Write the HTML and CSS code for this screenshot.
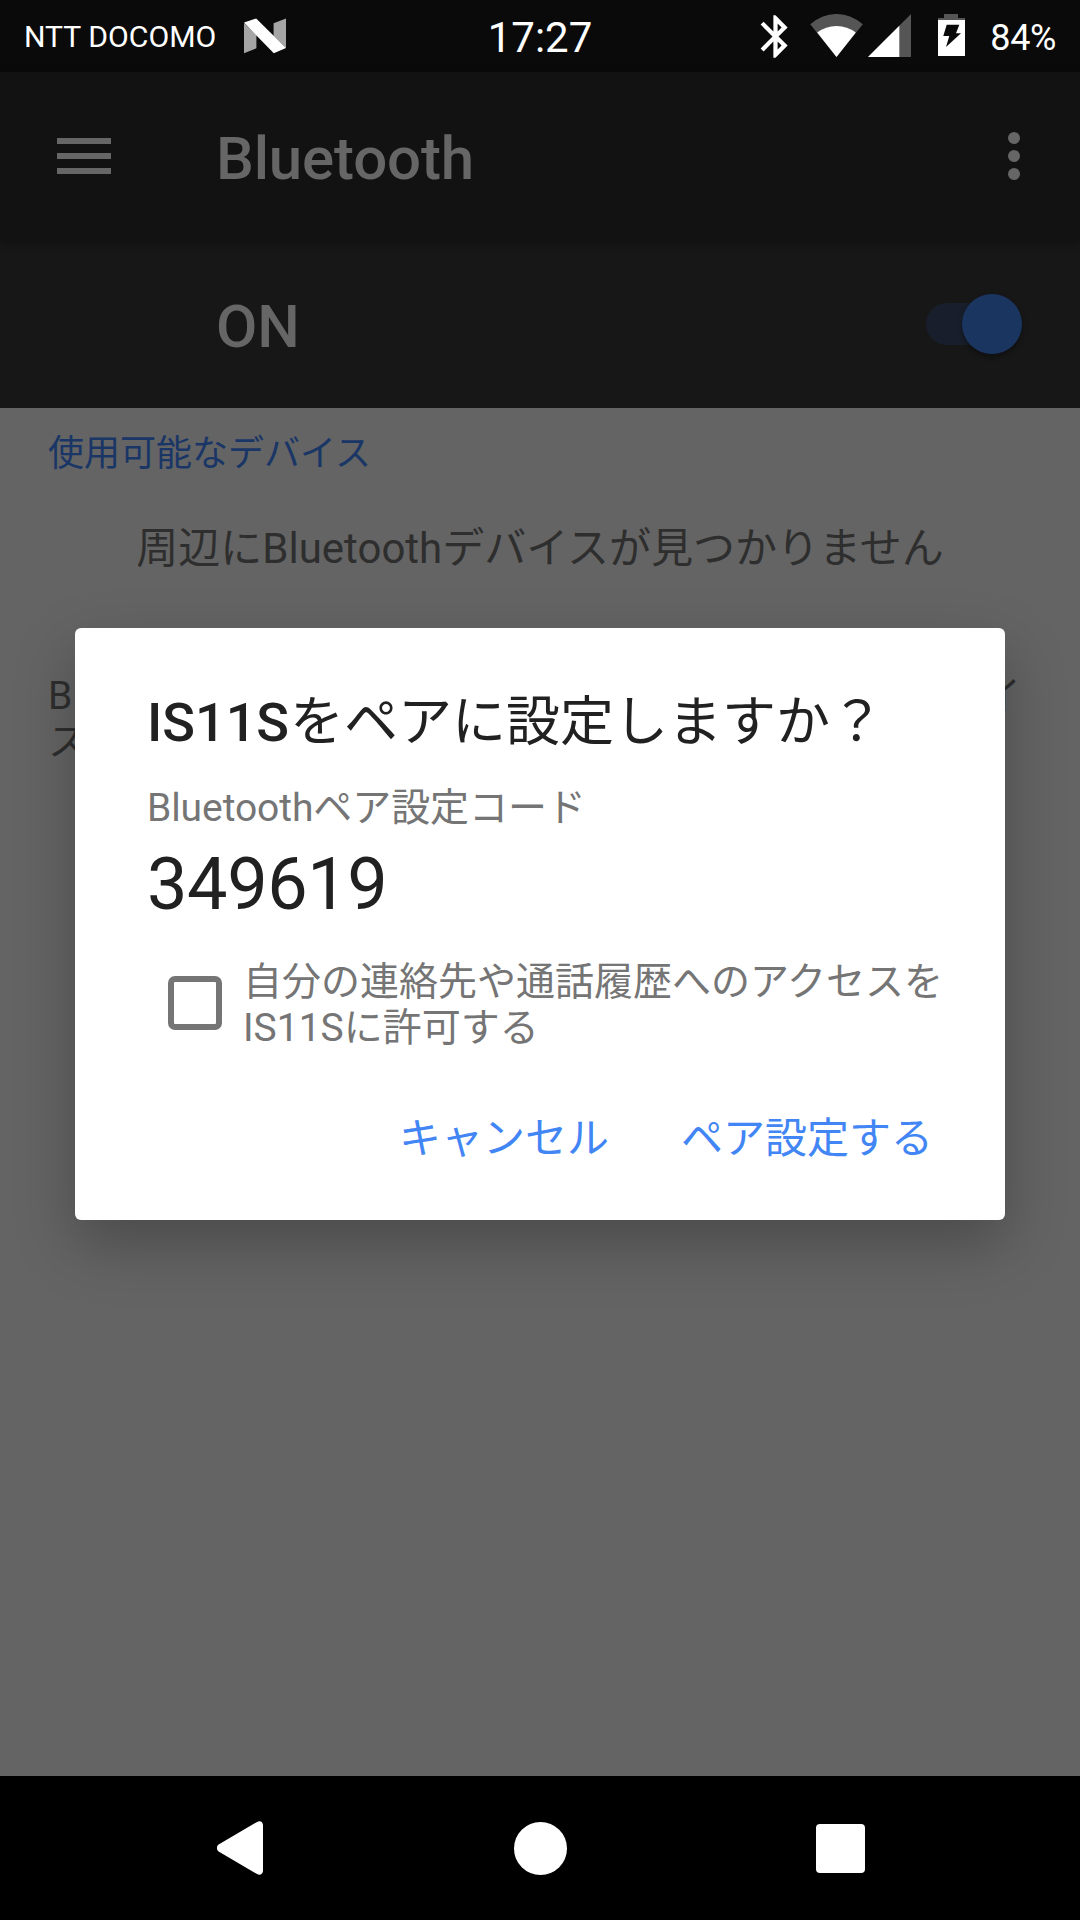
FILE: index.html
```html
<!DOCTYPE html>
<html lang="ja">
<head>
<meta charset="utf-8">
<title>Bluetooth</title>
<link rel="stylesheet" href="styles.css">
</head>
<body>
<header class="status-bar">
  <div class="status-left">
    <span class="carrier">NTT DOCOMO</span>
    <svg class="nougat" width="42" height="36" viewBox="0 0 42 36">
      <path fill="#a5a5a5" d="M0 5v30.3l12.4-5V17zM29.6 5.3L42 .4V30L29.6 18z"/>
      <path fill="#fff" d="M0 4.6L12.2.4 42 30l-12.2 5.3z"/>
    </svg>
  </div>
  <span class="clock">17:27</span>
  <div class="status-right">
    <svg class="bluetooth" width="51" height="51" viewBox="0 0 24 24">
      <path fill="#fff" d="M17.71 7.71L12 2h-1v7.59L6.41 5 5 6.41 10.59 12 5 17.59 6.41 19 11 14.41V22h1l5.71-5.71-4.3-4.29 4.3-4.29zM13 5.83l1.88 1.88L13 9.59V5.83zm1.88 10.46L13 18.17v-3.76l1.88 1.88z"/>
    </svg>
    <svg class="wifi" width="53" height="43" viewBox="0 0 53 43">
      <path fill="#555" d="M26.5 43L.2 10.3a38.7 38.7 0 0 1 52.6 0z"/>
      <path fill="#fff" d="M26.5 43L7.2 18.5a31.5 31.5 0 0 1 38.6 0z"/>
    </svg>
    <svg class="signal" width="43" height="43" viewBox="0 0 43 43">
      <path fill="#555" d="M43 0v43H0z"/>
      <path fill="#fff" d="M31.3 11.7V43H0z"/>
    </svg>
    <svg class="battery" width="27" height="42" viewBox="0 0 27 42">
      <path fill="#555" d="M6 0h14v4h7v3H0V4h6z"/>
      <path fill="#fff" fill-rule="evenodd" d="M0 6h27v36H0zM8.7 10.7L5.3 22h6L8 33l15-13.700h-5l3.300-8.600z"/>
    </svg>
    <span class="percent">84%</span>
  </div>
</header>

<div class="app-bar">
  <svg class="menu" width="54" height="36" viewBox="0 0 54 36">
    <path fill="#666" d="M0 0h54v6H0zM0 15h54v6H0zM0 30h54v6H0z"/>
  </svg>
  <h1 class="app-title">Bluetooth</h1>
  <svg class="more" width="12" height="48" viewBox="0 0 12 48">
    <g fill="#666"><circle cx="6" cy="6" r="6"/><circle cx="6" cy="24" r="6"/><circle cx="6" cy="42" r="6"/></g>
  </svg>
</div>

<div class="switch-bar">
  <span class="switch-label">ON</span>
  <span class="switch"><span class="thumb"></span></span>
</div>

<main class="content">
  <h2 class="section">使用可能なデバイス</h2>
  <p class="empty">周辺にBluetoothデバイスが見つかりません</p>
  <div class="footnote">
    <div class="footnote-line"><span>B</span><span>イ</span></div>
    <div class="footnote-line"><span>ス</span></div>
  </div>
</main>

<nav class="nav-bar">
  <svg class="back" width="46" height="54" viewBox="0 0 46 54">
    <path fill="#fff" d="M1.600 23.500L40 1C43-.8 46 .8 46 4.500v45c0 3.700-3 5.300-6 3.500L1.600 30.500c-2.200-1.500-2.200-5.500 0-7z"/>
  </svg>
  <span class="home"></span>
  <span class="recents"></span>
</nav>

<section class="dialog">
  <h2 class="dialog-title"><span class="latin">IS11S</span>をペアに設定しますか？</h2>
  <p class="caption">Bluetoothペア設定コード</p>
  <p class="code">349619</p>
  <div class="permission">
    <span class="checkbox"></span>
    <span class="permission-text">自分の連絡先や通話履歴へのアクセスを<br>IS11Sに許可する</span>
  </div>
  <div class="actions">
    <span class="action">キャンセル</span>
    <span class="action">ペア設定する</span>
  </div>
</section>
</body>
</html>
```
FILE: styles.css
```css
* { box-sizing: border-box; }
h1, h2, p { margin: 0; font-weight: 400; }
svg { display: block; flex: none; }

body {
  position: relative;
  display: flex;
  flex-direction: column;
  width: 1080px;
  height: 1920px;
  margin: 0;
  overflow: hidden;
  background: #646464;
  font-family: Roboto, "Noto Sans CJK JP", sans-serif;
}

.status-bar {
  display: grid;
  grid-template-columns: 1fr auto 1fr;
  height: 72px;
  background: #0a0a0a;
  color: #fff;
}
.status-left { display: flex; align-items: flex-start; padding-left: 24px; }
.carrier { width: 220px; font-size: 30.2px; line-height: 36px; padding-top: 19px; white-space: nowrap; }
.nougat { margin-top: 18px; }
.clock { font-size: 42px; line-height: 50px; padding-top: 13px; }
.status-right { display: flex; align-items: flex-start; justify-content: flex-end; padding-right: 24px; }
.bluetooth { margin-top: 11px; }
.wifi { margin: 14px 0 0 9px; }
.signal { margin: 14px 0 0 5px; }
.battery { margin: 14px 0 0 27px; }
.percent { margin-left: 25px; padding-top: 17px; font-size: 36px; line-height: 43px; letter-spacing: -.4px; }

.app-bar {
  position: relative;
  display: flex;
  align-items: center;
  height: 168px;
  padding: 0 60px 0 57px;
  background: #121212;
  box-shadow: 0 3px 9px rgba(0, 0, 0, .3);
}
.app-title {
  flex: 1;
  margin-left: 105px;
  padding-top: 5px;
  font-size: 60px;
  font-weight: 500;
  line-height: 70px;
  letter-spacing: -.15px;
  color: #666;
}

.switch-bar {
  display: flex;
  align-items: center;
  justify-content: space-between;
  height: 168px;
  padding: 0 58.500px 1px 216px;
  background: #171717;
}
.switch-label { padding-top: 6px; font-size: 60px; font-weight: 500; line-height: 70px; color: #666; }
.switch {
  display: flex;
  align-items: center;
  justify-content: flex-end;
  width: 96px;
  height: 42px;
  border-radius: 21px;
  background: #181e2b;
}
.thumb {
  width: 60px;
  height: 60px;
  border-radius: 50%;
  background: #1a355f;
  box-shadow: 0 3px 5px rgba(0, 0, 0, .35);
}

.content { flex: 1; padding: 22px 48px 0; }
.section { font-size: 36px; line-height: 48px; color: #1a3666; }
.empty { margin-top: 41px; font-size: 42px; line-height: 60px; text-align: center; color: #2e2e2e; }
.footnote { margin-top: 94px; padding-right: 11px; font-size: 39px; line-height: 46px; color: #2e2e2e; }
.footnote-line { display: flex; justify-content: space-between; }

.nav-bar {
  display: flex;
  align-items: center;
  justify-content: space-between;
  height: 144px;
  padding: 0 215px 0 217px;
  background: #000;
}
.home { width: 53px; height: 53px; margin-left: 1px; border-radius: 50%; background: #fff; }
.recents { width: 49px; height: 49px; border-radius: 4px; background: #fff; }

.dialog {
  position: absolute;
  left: 75px;
  top: 628px;
  width: 930px;
  height: 592px;
  padding: 62px 72px 0;
  border-radius: 6px;
  background: #fff;
  box-shadow: 0 24px 60px rgba(0, 0, 0, .26);
}
.dialog-title { font-size: 54px; line-height: 66px; color: #212121; white-space: nowrap; }
.latin { margin-right: 1px; font-weight: 500; }
.caption { margin-top: 29px; font-size: 39px; line-height: 46px; letter-spacing: -.08px; color: #757575; }
.code { margin-top: 12px; font-size: 72px; line-height: 84px; letter-spacing: -.4px; color: #212121; }
.permission { display: flex; align-items: center; margin-top: 33px; padding-left: 21px; }
.checkbox { flex: none; width: 54px; height: 54px; margin-top: -6px; border: 6px solid #757575; border-radius: 7px; }
.permission-text { margin-left: 21px; font-size: 39px; line-height: 45.7px; color: #757575; white-space: nowrap; }
.actions { display: flex; justify-content: flex-end; gap: 72px; margin-top: 63px; }
.action { font-size: 42px; line-height: 50px; color: #4285f4; }
```
